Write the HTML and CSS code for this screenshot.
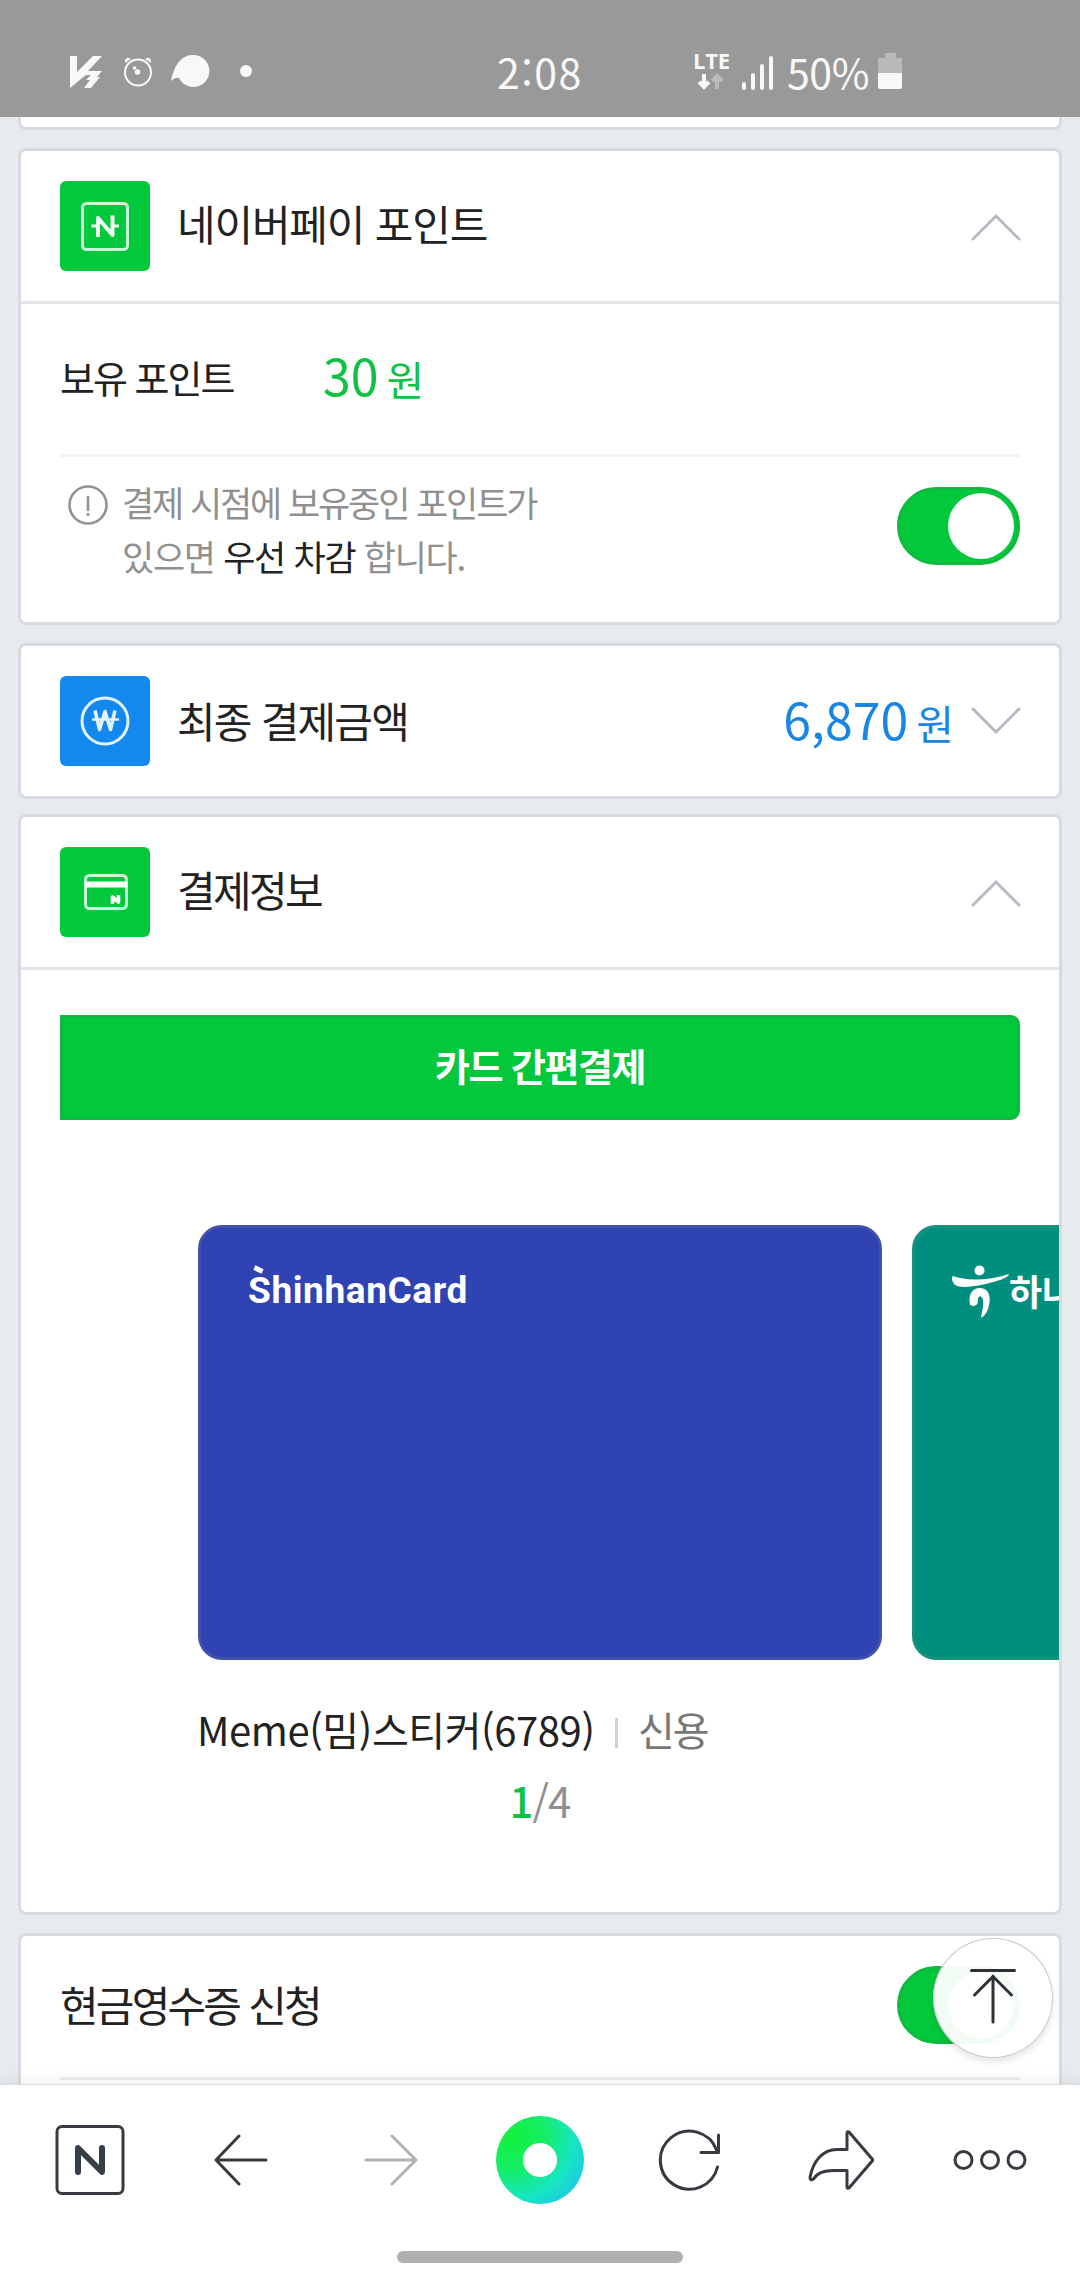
FILE: index.html
```html
<!DOCTYPE html>
<html lang="ko">
<head>
<meta charset="utf-8">
<title>네이버페이 결제</title>
<link rel="stylesheet" href="styles.css">
</head>
<body>
<div class="phone">
  <header class="status">
    <svg class="status-left" viewBox="70 50 184 44" width="184" height="44" fill="#f8f8f8">
      <path d="M70 56h7v16l16-16h9L88 71h14l-5 6h3l-9 11H84l6-8h-4l5-5h-5L70 88z"/>
      <circle cx="138" cy="72.500" r="13" fill="none" stroke="#f8f8f8" stroke-width="2"/>
      <path d="M125 63v-3q2-4 6-1zM151 63v-3q-2-4-6-1z"/>
      <circle cx="137.500" cy="72" r="2.700"/><circle cx="134.500" cy="68" r="1.800"/>
      <path d="M171 81C175 62 183 55 193 55a16 16 0 1 1-14 23q-4-1-8 3z"/>
      <circle cx="246" cy="71" r="6"/>
    </svg>
    <span class="clock">2:08</span>
    <span class="network"><b class="lte">LTE</b>
      <svg viewBox="0 0 26 17" width="26" height="17" fill="none" stroke-width="4"><path d="M6 1v13M1 9l5 5 5-5" stroke="#f8f8f8"/><path d="M19 16V3M14 8l5-5 5 5" stroke="#bbb"/></svg>
    </span>
    <svg class="signal" viewBox="0 0 32 36" width="32" height="36" stroke="#f8f8f8" stroke-width="4" stroke-linecap="round"><path d="M2 29v4M11 20v13M20 11v22M29 3v30"/></svg>
    <span class="percent">50%</span>
    <svg class="battery" viewBox="0 0 24 36" width="24" height="36"><path d="M7 0h11v5h6v16H0V5h7z" fill="#b9b9b9"/><path d="M0 20h24v14q0 2-2 2H2q-2 0-2-2z" fill="#f8f8f8"/></svg>
  </header>

  <main class="content">
    <section class="card card-prev"></section>

    <section class="card card-points">
      <div class="card-head">
        <svg class="badge green" viewBox="0 0 90 90"><rect x="22.500" y="22.500" width="45" height="46" rx="4" fill="none" stroke="#c9f9d6" stroke-width="3"/><path d="M38 56V37l14.500 17V34.500" fill="none" stroke="#f2fff5" stroke-width="4" stroke-linejoin="round"/><path d="M31.500 45h6.500M52 45h7" stroke="#f2fff5" stroke-width="3"/></svg>
        <h2 class="title t-points">네이버페이 포인트</h2>
        <svg class="chevron up" viewBox="0 0 50 28"><path d="M2 26 25 3l23 23"/></svg>
      </div>
      <div class="points-body">
        <div class="balance"><span class="balance-label">보유 포인트</span><span class="balance-value">30<i class="won">원</i></span></div>
        <div class="notice">
          <svg class="info" viewBox="0 0 40 40" width="40" height="40" fill="none" stroke="#909499" stroke-width="2.600"><circle cx="20" cy="20" r="18.500"/><path d="M20 11v15M20 28v3"/></svg>
          <p class="notice-text"><span class="line-a">결제 시점에 보유중인 포인트가</span><br><span class="line-b">있으면 <em>우선 차감</em> 합니다.</span></p>
          <span class="toggle"><span class="knob"></span></span>
        </div>
      </div>
    </section>

    <section class="card card-total">
      <div class="card-head">
        <svg class="badge blue" viewBox="0 0 90 90" fill="none" stroke="#e4f3ff"><circle cx="45" cy="45" r="23" stroke-width="3"/><path d="M35 34.500l4.500 19 5.500-18 5.500 18 4.500-19" stroke-width="3.500" stroke-linejoin="round"/><path d="M32 43.500h27" stroke-width="2.500"/></svg>
        <h2 class="title t-total">최종 결제금액</h2>
        <span class="amount">6,870<i class="won">원</i></span>
        <svg class="chevron" viewBox="0 0 50 28"><path d="M2 2l23 23L48 2"/></svg>
      </div>
    </section>

    <section class="card card-pay">
      <div class="card-head">
        <svg class="badge green" viewBox="0 0 90 90"><rect x="25.500" y="28.500" width="41" height="33" rx="4" fill="none" stroke="#c9f9d6" stroke-width="3"/><path d="M25 37.500h42" stroke="#fff" stroke-width="6"/><path d="M52.500 57v-7l6 5v-7" fill="none" stroke="#fff" stroke-width="3.600" stroke-linejoin="round"/></svg>
        <h2 class="title t-pay">결제정보</h2>
        <svg class="chevron up" viewBox="0 0 50 28"><path d="M2 26 25 3l23 23"/></svg>
      </div>
      <button class="pay-tab">카드 간편결제</button>
      <div class="carousel">
        <div class="pay-card shinhan"><span class="shinhan-logo">ShinhanCard</span></div>
        <div class="pay-card hana">
          <svg viewBox="0 0 58 54" width="58" height="54" fill="#fff"><circle cx="27.500" cy="5.500" r="5"/><path d="M1 11c12 5 35 5 56-2 0 4-14 8-28 11C18 22 8 23 3 20 0 17-1 12 1 11z"/><path d="M18 40c-2-10 2-17 10-17 9 0 11 9 9 17-1 6-4 11-8 13 1-7 3-13 2-18-1-5-5-5-5 0 0 3-1 6-5 6z"/></svg>
          <span class="hana-name">하나</span>
        </div>
      </div>
      <p class="card-label"><span class="card-name">Meme(밈)스티커(6789)</span><span class="divider"></span><span class="card-kind">신용</span></p>
      <p class="pager"><b>1</b>/4</p>
    </section>

    <section class="card card-receipt">
      <div class="receipt-row"><h2 class="title t-receipt">현금영수증 신청</h2><span class="toggle"><span class="knob"></span></span></div>
    </section>

    <div class="to-top"><svg viewBox="0 0 120 120" fill="none" stroke="#303038" stroke-width="3" stroke-linecap="round" stroke-linejoin="round"><path d="M38.500 32.500h43M60 84V38M41.500 57 60 38.500 78.500 57"/></svg></div>
  </main>

  <nav class="toolbar">
    <div class="tools">
      <svg viewBox="0 0 72 72" width="72" height="72" fill="none" stroke="#383a42"><rect x="3" y="2.500" width="66" height="67" rx="5" stroke-width="3"/><path d="M24 48V24l24 24V24" stroke="#363f48" stroke-width="6" stroke-linecap="round" stroke-linejoin="round"/></svg>
      <svg viewBox="-2 0 56 56" width="56" height="56" class="stroke"><path d="M52 28H2M25 4 2 28l23 24"/></svg>
      <svg viewBox="-1 0 56 56" width="56" height="56" class="stroke muted"><path d="M3 28h50M29 4l24 24-24 24"/></svg>
      <span class="dot"></span>
      <svg viewBox="0 0 64 64" width="64" height="64" class="stroke"><path d="M59.500 39A29 29 0 1 1 58.500 22M60.500 7v17.500H43"/></svg>
      <svg viewBox="-1 0 68 64" width="68" height="64" class="stroke"><path d="M40 5q0-2 2-1l24 28-24 28q-2 1-2-1V42.500H30C18 42 10 45 7 50.500q-4 3-4-1C6 33 16 21.500 30 21.500h10z"/></svg>
      <svg viewBox="0 0 74 24" width="74" height="24" class="stroke"><circle cx="10.500" cy="12" r="8.500"/><circle cx="37" cy="12" r="8.500"/><circle cx="63.500" cy="12" r="8.500"/></svg>
    </div>
    <div class="home-bar"></div>
  </nav>
</div>
</body>
</html>
```
FILE: styles.css
```css
* { box-sizing: border-box; }
body, h2, p { margin: 0; }
body {
  background: #e7ebee;
  color: #222;
  font-family: "Noto Sans CJK KR", sans-serif;
}
em, i { font-style: normal; }
svg { display: block; flex: none; }

.phone {
  width: 1080px;
  height: 2280px;
  display: flex;
  flex-direction: column;
  overflow: hidden;
}

/* status bar */
.status {
  flex: none;
  height: 117px;
  padding: 50px 0 0 70px;
  background: #999;
  color: #f8f8f8;
  display: flex;
  align-items: flex-start;
  line-height: 42px;
}
.clock { width: 86px; margin-left: 243px; font-size: 41px; letter-spacing: 1.5px; }
.network { width: 38px; margin-left: 110px; padding-top: 1px; }
.network svg { margin: 4px 0 0 5px; }
.lte { display: block; font: bold 22px/18px "Open Sans", sans-serif; letter-spacing: -.2px; }
.signal { margin: 5px 0 0 11px; }
.percent { width: 88px; margin-left: 13px; font-size: 41px; letter-spacing: -.4px; }
.battery { margin: 3px 0 0 3px; }

/* cards */
.content {
  position: relative;
  flex: 1;
  min-height: 0;
  padding: 0 18px;
  overflow: hidden;
}
.card {
  background: #fff;
  border: 3px solid #d7dbe1;
  border-radius: 8px;
  overflow: hidden;
}
.card-prev { height: 13px; border-top: 0; border-radius: 0 0 8px 8px; }
.card-points { height: 477px; margin-top: 18px; }
.card-total { height: 156px; margin-top: 18px; }
.card-pay { height: 1101px; margin-top: 15px; }
.card-receipt { height: 200px; margin-top: 18px; }
.card-head { height: 150px; padding: 0 38px 0 39px; display: flex; align-items: center; }
.card-points .card-head, .card-pay .card-head { height: 153px; border-bottom: 3px solid #e1e4e8; }
.badge { width: 90px; height: 90px; border-radius: 6px; }
.green { background: #03c83c; }
.blue { background: #1389ef; }
.title { font-weight: 400; font-size: 42px; line-height: 60px; white-space: nowrap; margin: -6px 0 0 27px; }
.t-points { letter-spacing: -1.2px; }
.t-total { letter-spacing: -1.8px; margin-top: -3px; }
.t-pay { letter-spacing: -2.6px; }
.chevron { width: 50px; height: 28px; margin-left: auto; fill: none; stroke: #b4b9c2; stroke-width: 3; stroke-linecap: round; }
.chevron.up { margin-top: 1px; }
.amount { margin: -3px 0 0 auto; color: #1a86e3; font-size: 50px; line-height: 60px; white-space: nowrap; }
.amount + .chevron { margin-left: 17px; }
.won { font-size: 41px; margin-left: 8px; }

.points-body { margin: 0 39px; }
.balance { height: 153px; padding-bottom: 6px; border-bottom: 3px solid #f0f2f3; display: flex; align-items: center; }
.balance-label { width: 263px; font-size: 38px; letter-spacing: -2px; }
.balance-value { color: #0fc243; font-size: 50px; line-height: 60px; }
.notice { padding: 25px 0 0 8px; display: flex; align-items: flex-start; }
.info { margin-top: 3px; }
.notice-text { margin: -7px 0 0 14px; color: #909090; font-size: 35px; line-height: 54px; white-space: nowrap; }
.notice-text em { color: #222; }
.line-a { letter-spacing: -2.1px; }
.line-b { letter-spacing: -1.3px; }
.toggle {
  width: 123px;
  height: 78px;
  margin: 5px 0 0 auto;
  padding: 3px;
  border: 3px solid #0fb93f;
  border-radius: 39px;
  background: #03c83c;
  display: flex;
  justify-content: flex-end;
}
.knob { width: 66px; height: 66px; border-radius: 50%; background: #fff; }

/* payment methods */
.pay-tab {
  display: block;
  width: 960px;
  height: 105px;
  margin: 45px 39px 0;
  padding: 0 0 6px;
  border: 3px solid #0fb93f;
  border-radius: 0 9px 9px 0;
  background: #03c83c;
  color: #fff;
  font: bold 38px/90px "Noto Sans CJK KR", sans-serif;
  letter-spacing: -1.5px;
}
.carousel { display: flex; gap: 30px; margin: 105px 0 0 177px; }
.pay-card { flex: none; width: 684px; height: 435px; border-radius: 24px; border: 3px solid; display: flex; align-items: flex-start; }
.shinhan { background: #2f43b2; border-color: #4450ac; padding: 36px 0 0 47px; }
.hana { background: #008f7f; border-color: #17907e; padding: 37px 0 0 37px; }
.shinhan-logo { position: relative; color: #fff; font: bold 37px/54px Roboto, sans-serif; letter-spacing: .6px; }
.shinhan-logo::before {
  content: "";
  position: absolute;
  left: 6px;
  top: 3px;
  width: 9px;
  height: 5px;
  background: #fff;
  transform: rotate(25deg);
}
.hana-name { margin: -2px 0 0 -1px; color: #fff; font-weight: bold; font-size: 36px; line-height: 54px; white-space: nowrap; }
.card-label { height: 58px; margin: 40px 0 0 176px; display: flex; align-items: center; font-size: 40px; line-height: 58px; white-space: nowrap; }
.card-name { width: 398px; letter-spacing: -.4px; }
.divider { width: 3px; height: 30px; margin: 7px 20px 0; background: #d0d0d0; }
.card-kind { color: #777; letter-spacing: -2px; }
.pager { margin-top: 13px; text-align: center; color: #909090; font-size: 42px; line-height: 58px; letter-spacing: -1px; }
.pager b { color: #0fc243; font-weight: 500; }

.receipt-row { height: 144px; margin: 0 39px; border-bottom: 3px solid #ebedf0; display: flex; align-items: flex-start; }
.t-receipt { margin: 38px 0 0; letter-spacing: -2.8px; }
.receipt-row .toggle { margin-top: 30px; }
.to-top {
  position: absolute;
  left: 933px;
  top: 1821px;
  width: 120px;
  height: 120px;
  border-radius: 50%;
  background: rgba(255, 255, 255, .95);
  box-shadow: inset 0 0 0 1px #c8c8c8, 0 4px 7px rgba(0, 0, 0, .1);
}

/* browser toolbar */
.toolbar {
  position: relative;
  flex: none;
  height: 196px;
  padding-top: 30px;
  background: #fff;
  border-top: 1px solid #dcdfe1;
  box-shadow: 0 -4px 16px rgba(0, 0, 0, .06);
}
.tools { height: 90px; padding: 0 15px; display: grid; grid-template-columns: repeat(7, 150px); place-items: center; }
.stroke { fill: none; stroke: #383a42; stroke-width: 3; stroke-linecap: round; stroke-linejoin: round; }
.muted { stroke: #b2b2b2; }
.dot {
  width: 88px;
  height: 88px;
  border-radius: 50%;
  background: radial-gradient(circle, #fff 16.500px, transparent 17.500px), radial-gradient(circle at 18% 24%, #12f23c 0, #15ed62 32%, #16e6c0 62%, #20c0ee 92%);
}
.home-bar { width: 286px; height: 12px; margin: 46px auto 0; border-radius: 6px; background: #b0b0b0; }
```
